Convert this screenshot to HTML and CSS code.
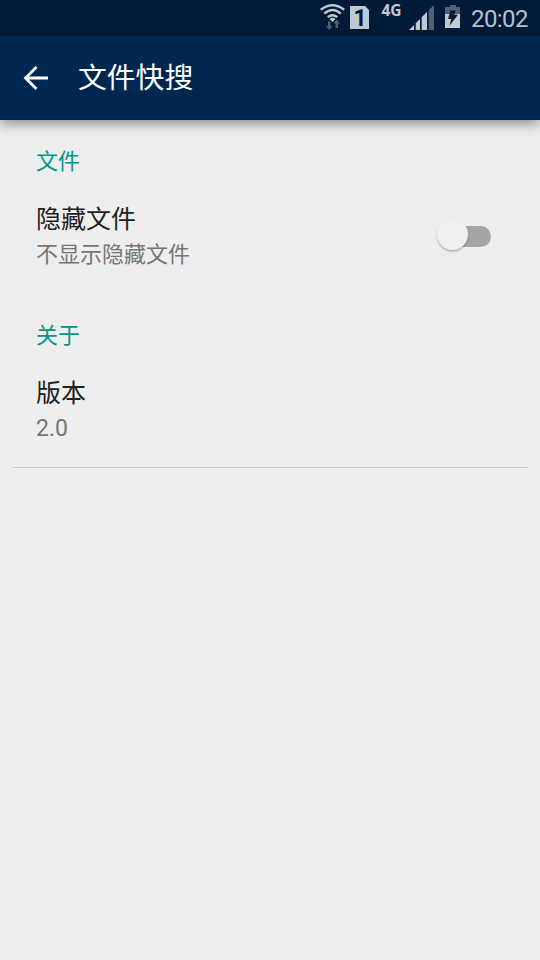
FILE: index.html
```html
<!DOCTYPE html>
<html lang="zh-CN">
<head><meta charset="utf-8"><title>文件快搜</title><link rel="stylesheet" href="styles.css"></head>
<body>
<div class="status">
<svg class="status-icons" width="160" height="36" viewBox="310 0 160 36" fill="none">
<g stroke="#c0c8d1" stroke-width="2.400"><path d="M320.800 9.800Q332.500 .8 344.200 9.800M324.300 13.600Q332.500 6.600 340.700 13.600M327.800 17.200Q332.500 13.200 337.200 17.200"/></g>
<path d="M329.500 19Q332.500 16.500 335.500 19L332.500 22z" fill="#c0c8d1"/>
<path d="M328 21.500h2.500V26h2l-3.300 4-3.200-4h2zM336.700 19.500l-3.200 4h2V28h2.500v-4.500h2z" fill="#4d6177"/>
<path d="M350 6h15l4 4v19h-19z" fill="#c0c8d1"/>
<text class="sim" x="353.500" y="26">1</text>
<text class="net" x="381.500" y="16">4G</text>
<path d="M409 30l5-5v5zM415.700 23.300L420 19v11h-4.300zM421.700 17.300L427 12v18h-5.300z" fill="#c0c8d1"/>
<path d="M428.700 10.300L434 5v25h-5.300z" fill="#4d6177"/>
<path d="M450 5h6v2h4v7h-15V7h5z" fill="#4d6177"/><path d="M445 14h15v14h-15z" fill="#c0c8d1"/>
<path d="M450.500 10.500h5.300l-1.500 4.300h3.700l-8.500 11 1.700-6.800H448z" fill="#0c1b2b"/>
</svg>
<span class="time">20:02</span>
</div>
<header class="bar">
<svg width="26" height="26" viewBox="0 0 26 26" fill="none" stroke="#fff" stroke-width="2.800"><path d="M25 13H3M13.500 2L2.500 13l11 11"/></svg>
<h1>文件快搜</h1>
</header>
<main>
<h2>文件</h2>
<section class="row"><div><div class="name">隐藏文件</div><div class="desc">不显示隐藏文件</div></div><div class="switch"><i class="thumb"></i></div></section>
<h2>关于</h2>
<section class="row last"><div><div class="name">版本</div><div class="desc version">2.0</div></div></section>
</main>
</body>
</html>
```
FILE: styles.css
```css
*{box-sizing:border-box}
body{margin:0;height:960px;background:#eee;font-family:Roboto,"Noto Sans CJK SC",sans-serif;overflow:hidden}
.status{height:36px;background:#001b38;display:flex;justify-content:flex-end;padding-right:12px;color:#b8c0c8;font-size:24px;line-height:38px}
.status-icons{flex:none}
.time{width:58px;padding-left:1px;letter-spacing:-.6px;white-space:nowrap}
.sim{font:bold 23px Roboto,sans-serif;fill:#001b38}
.net{font:bold 15.500px "Noto Sans",sans-serif;fill:#c0c8d1}
.bar{height:84px;background:#002750;display:flex;align-items:center;padding-left:23px;gap:29px;color:#fff;box-shadow:0 4px 12px #0006}
h1{margin:0;font-size:28.800px;font-weight:400;line-height:40px}
main{padding:0 12px}
h2{margin:0;padding:25px 24px 0;height:58px;font-size:22px;font-weight:400;line-height:34px;color:#009688}
.row{display:flex;justify-content:space-between;padding:24px 37px 0 24px;height:116px}
.name{font-size:25px;line-height:35px;color:#212121}
.desc{font-size:22px;line-height:36px;color:#757575}
.version{font-size:23px}
.last{border-bottom:1px solid #ccc}
.switch{width:51px;height:21px;margin-top:24px;border-radius:11px;background:#a5a5a5}
.thumb{display:block;width:31px;height:31px;margin:-7px 0 0 -3px;border-radius:50%;background:#f0f0f0;box-shadow:0 1.500px 2px #0004}
```
